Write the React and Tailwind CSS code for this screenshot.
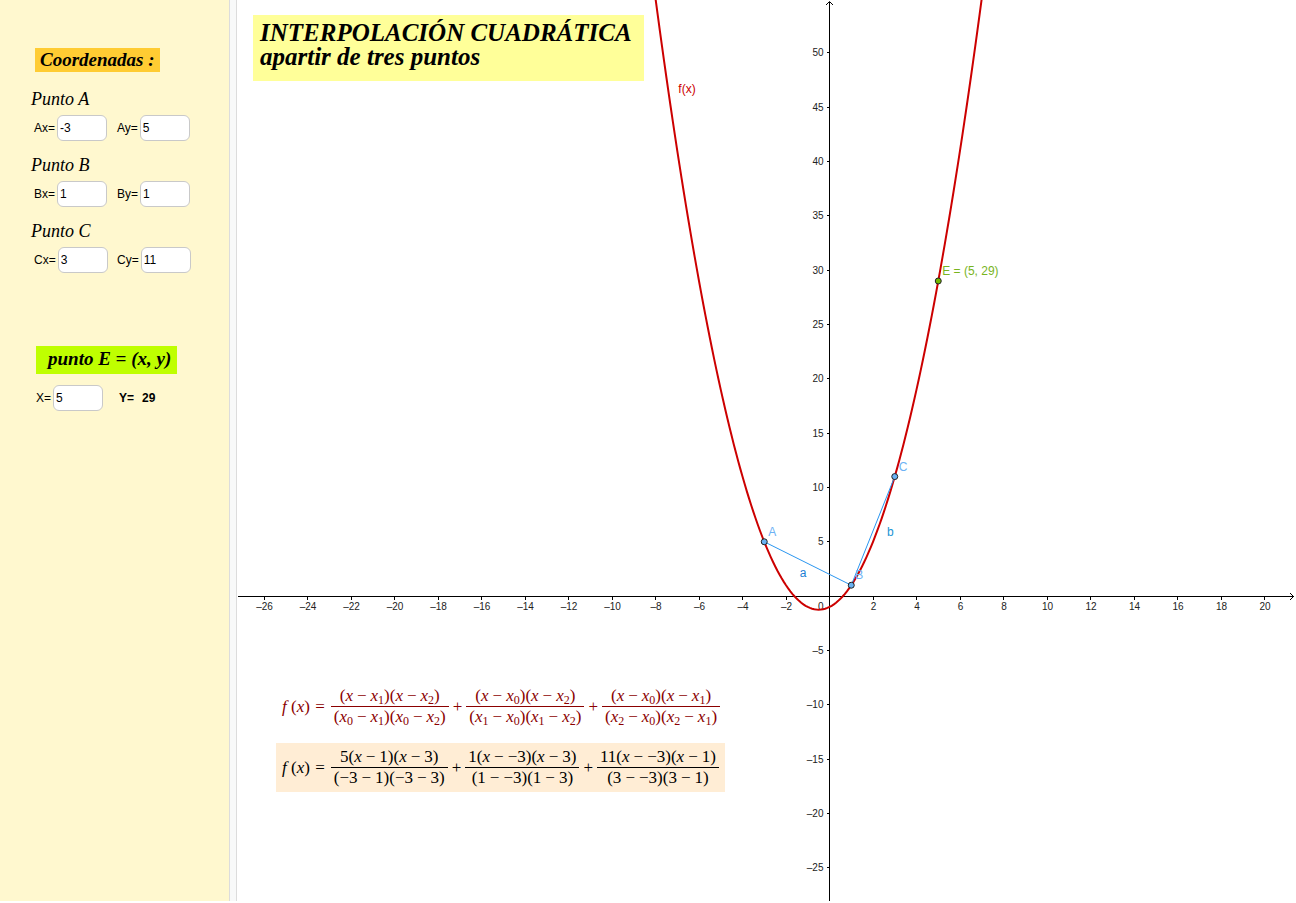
import React, { useState } from 'react';

// Canvas units: pixels per step and where (0, 0) falls on the graph panel
const ORIGIN = { x: 592.5, y: 596.1 };
const SCALE = { x: 21.75, y: 10.866 };

const toX = (x) => ORIGIN.x + x * SCALE.x;
const toY = (y) => ORIGIN.y - y * SCALE.y;
// Ticks and axes sit on whole pixel rows
const rowY = (y) => Math.floor(toY(y)) + 0.5;

const range = (from, to, step) => {
  const out = [];
  for (let v = from; v <= to; v += step) if (v !== 0) out.push(v);
  return out;
};

const X_TICKS = range(-26, 20, 2);
const Y_TICKS = range(-25, 50, 5);

const tickLabel = (v) => (v < 0 ? `–${Math.abs(v)}` : `${v}`);
const num = (s) => parseFloat(s) || 0;
const minus = (s) => String(s).replace('-', '−');

// Lagrange polynomial through three points
const lagrange = (p, x) =>
  p.reduce((sum, pi, i) => {
    let term = pi.y;
    p.forEach((pj, j) => {
      if (i !== j) term *= (x - pj.x) / (pi.x - pj.x);
    });
    return sum + term;
  }, 0);

const Field = ({ id, label, value, onChange }) => (
  <div className="flex items-center gap-0.5 w-[83px]">
    <label htmlFor={id} className="text-xs">{label}=</label>
    <input
      id={id}
      type="text"
      value={value}
      onChange={(e) => onChange(e.target.value)}
      className="w-[50px] h-[26px] px-0.5 text-xs bg-white border border-[#c9c9c9] rounded-md outline-none focus:border-sky-300"
    />
  </div>
);

const PointGroup = ({ name, point, onChange }) => (
  <div className="flex flex-col gap-1">
    <h2 className="h-6 leading-6 pl-[31px] text-lg italic font-['Liberation_Serif',serif]">Punto {name}</h2>
    <div className="flex pl-[34px]">
      <Field id={`${name}x`} label={`${name}x`} value={point.x} onChange={(v) => onChange({ ...point, x: v })} />
      <Field id={`${name}y`} label={`${name}y`} value={point.y} onChange={(v) => onChange({ ...point, y: v })} />
    </div>
  </div>
);

// "5(x - 1)" style strings: x is italic, x0 gets a subscript, " - " is a spaced operator
const MathText = ({ children }) =>
  children.split(/( - |x\d?)/).map((part, i) => {
    if (part === ' - ') return <span key={i} className="mx-1">−</span>;
    if (part[0] === 'x') return (
      <span key={i}><i>x</i>{part[1] && <sub className="text-xs leading-none">{part[1]}</sub>}</span>
    );
    return <span key={i}>{minus(part)}</span>;
  });

const Fraction = ({ top, bottom }) => (
  <span className="inline-flex flex-col text-center whitespace-nowrap">
    <span className="h-5 leading-5 border-b border-current box-content px-[3px]"><MathText>{top}</MathText></span>
    <span className="h-5 leading-5 px-[3px]"><MathText>{bottom}</MathText></span>
  </span>
);

const Formula = ({ terms, className }) => (
  <div className={`flex items-center w-fit px-1.5 py-1 text-[17px] font-['Liberation_Serif',serif] ${className}`}>
    <span className="whitespace-nowrap mr-1.5"><i>f</i> (<i>x</i>) <span className="ml-px">=</span></span>
    {terms.map(([top, bottom], i) => (
      <React.Fragment key={i}>
        {i > 0 && <span className="mx-1">+</span>}
        <Fraction top={top} bottom={bottom} />
      </React.Fragment>
    ))}
  </div>
);

const Graph = ({ points, e }) => {
  const [A, B, C] = points;
  const curve = [];
  for (let x = -28; x <= 28; x += 0.1) {
    curve.push(`${toX(x).toFixed(2)},${toY(lagrange(points, x)).toFixed(2)}`);
  }

  return (
    <svg className="absolute inset-0 w-full h-full font-['Liberation_Sans',sans-serif]" overflow="hidden">
      {/* Axes */}
      <g stroke="#000" shapeRendering="crispEdges">
        <line x1="1" y1={rowY(0)} x2="100%" y2={rowY(0)} />
        <line x1={ORIGIN.x} y1="2" x2={ORIGIN.x} y2="100%" />
        {X_TICKS.map((v) => <line key={v} x1={toX(v)} x2={toX(v)} y1={rowY(0)} y2={rowY(0) + 3} />)}
        {Y_TICKS.map((v) => <line key={v} x1={ORIGIN.x - 3} x2={ORIGIN.x} y1={rowY(v)} y2={rowY(v)} />)}
      </g>
      <path d={`M${ORIGIN.x - 3.5} 5L${ORIGIN.x} 1.5L${ORIGIN.x + 3.5} 5`} fill="none" stroke="#000" />
      <svg x="100%" y={rowY(0)} overflow="visible">
        <path d="M-4 -3.5L-0.5 0L-4 3.5" fill="none" stroke="#000" />
      </svg>
      <g fontSize="10" fill="#222">
        {X_TICKS.map((v) => <text key={v} x={toX(v) + 0.5} y="610" textAnchor="middle">{tickLabel(v)}</text>)}
        {Y_TICKS.map((v) => <text key={v} x={ORIGIN.x - 6} y={rowY(v) + 3.5} textAnchor="end">{tickLabel(v)}</text>)}
        <text x={ORIGIN.x - 6} y="610" textAnchor="end">0</text>
      </g>

      {/* Curve and segments */}
      <polyline points={curve.join(' ')} fill="none" stroke="#cc0000" strokeWidth="2" />
      <g stroke="#2a96f0" strokeWidth="1">
        <line x1={toX(A.x)} y1={toY(A.y)} x2={toX(B.x)} y2={toY(B.y)} />
        <line x1={toX(B.x)} y1={toY(B.y)} x2={toX(C.x)} y2={toY(C.y)} />
      </g>

      {/* Points */}
      {points.map((p, i) => (
        <circle key={i} cx={toX(p.x)} cy={toY(p.y)} r="3" fill="#69b1f2" stroke="#222" />
      ))}
      <circle cx={toX(e.x)} cy={toY(e.y)} r="3" fill="#73b900" stroke="#222" />

      {/* Labels */}
      <g fontSize="12">
        <g fill="#6cb2f5">
          {points.map((p, i) => (
            <text key={i} x={toX(p.x) + 4} y={toY(p.y) - 6}>{'ABC'[i]}</text>
          ))}
        </g>
        <text x={toX((A.x + B.x) / 2) - 8} y={toY((A.y + B.y) / 2) + 13} fill="#1b7fd4">a</text>
        <text x={toX((B.x + C.x) / 2) + 14} y={toY((B.y + C.y) / 2) + 5} fill="#1b94d4">b</text>
        <text x={toX(-6.95)} y={toY(46.3)} fill="#cc0000">f(x)</text>
        <text x={toX(e.x) + 4} y={toY(e.y) - 6} fill="#78b41e">{`E = (${e.x}, ${e.y})`}</text>
      </g>
    </svg>
  );
};

const App = () => {
  const [a, setA] = useState({ x: '-3', y: '5' });
  const [b, setB] = useState({ x: '1', y: '1' });
  const [c, setC] = useState({ x: '3', y: '11' });
  const [ex, setEx] = useState('5');

  const points = [a, b, c].map((p) => ({ x: num(p.x), y: num(p.y) }));
  const e = { x: num(ex), y: Math.round(lagrange(points, num(ex)) * 100) / 100 };

  const general = [
    ['(x - x1)(x - x2)', '(x0 - x1)(x0 - x2)'],
    ['(x - x0)(x - x2)', '(x1 - x0)(x1 - x2)'],
    ['(x - x0)(x - x1)', '(x2 - x0)(x2 - x1)'],
  ];
  const term = (p, q, r) => [
    `${p.y}(x - ${q.x})(x - ${r.x})`,
    `(${p.x} - ${q.x})(${p.x} - ${r.x})`,
  ];
  const values = [term(a, b, c), term(b, a, c), term(c, a, b)];

  return (
    <div className="flex min-h-screen pb-0.5 pr-0.5 bg-white text-black font-['Liberation_Sans',sans-serif]">
      {/* Inputs */}
      <aside className="w-[229px] shrink-0 pt-12 bg-[#fff8cf]">
        <h2 className="w-fit ml-[35px] px-[5px] h-6 leading-6 bg-[#ffcc33] text-[19px] font-bold italic font-['Liberation_Serif',serif]">
          Coordenadas :
        </h2>
        <div className="flex flex-col gap-3 mt-[15px]">
          <PointGroup name="A" point={a} onChange={setA} />
          <PointGroup name="B" point={b} onChange={setB} />
          <PointGroup name="C" point={c} onChange={setC} />
        </div>
        <h2 className="w-fit ml-9 mt-[73px] pl-3 pr-1.5 h-7 leading-[26px] bg-[#bfff00] text-[19px] font-bold italic font-['Liberation_Serif',serif]">
          punto E = (x, y)
        </h2>
        <div className="flex items-center mt-[11px] pl-9">
          <Field id="Ex" label="X" value={ex} onChange={setEx} />
          <output htmlFor="Ex" className="flex gap-2 text-xs font-bold"><span>Y=</span><span>{e.y}</span></output>
        </div>
      </aside>

      <div className="w-2 shrink-0 bg-[#f8f9f9] border-x border-[#dcdcdc]"></div>

      {/* Graph */}
      <main className="relative flex-1 min-w-0 pt-[15px] pl-4">
        <Graph points={points} e={e} />
        <div className="relative">
          <h1 className="w-fit pl-[7px] pr-3 pt-1.5 pb-3 bg-[#ffff99] text-[25px] leading-6 font-bold italic font-['Liberation_Serif',serif]">
            INTERPOLACIÓN CUADRÁTICA<br />apartir de tres puntos
          </h1>
          <div className="flex flex-col gap-3 mt-[601px] pl-[23px]">
            <Formula terms={general} className="text-[#8b0000]" />
            <Formula terms={values} className="bg-[#ffedd5]" />
          </div>
        </div>
      </main>
    </div>
  );
};

export default App;
